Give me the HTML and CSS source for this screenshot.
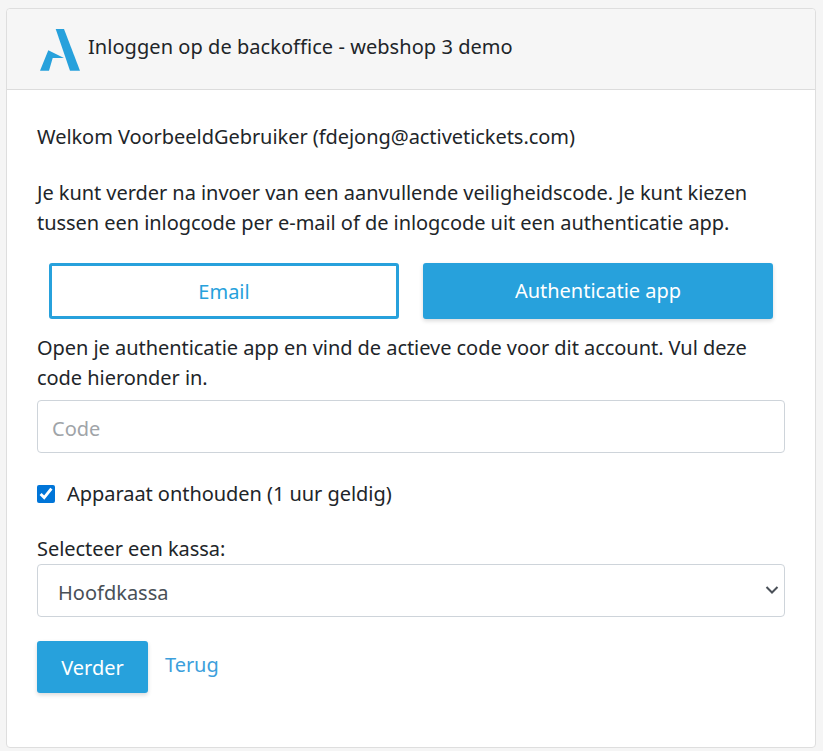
FILE: index.html
```html
<!DOCTYPE html>
<html lang="nl">
<head>
    <meta charset="UTF-8">
    <meta name="viewport" content="width=device-width, initial-scale=1.0">
    <title>Inloggen op de backoffice</title>
    <link rel="stylesheet" href="styles.css">
</head>
<body>

    <div class="card">
        <div class="card-header">
            <svg class="logo" width="40" height="42" viewBox="0 0 40 42">
                <path fill="#27a1dc" d="M15.700 0H24L40 41.700H30Z"/>
                <path fill="#27a1dc" d="M0 41.700H9L12.700 29H24L8.300 21.300Z"/>
            </svg>
            <span class="title">Inloggen op de backoffice - webshop 3 demo</span>
        </div>

        <form class="card-body">
            <p class="welcome">Welkom VoorbeeldGebruiker (fdejong@activetickets.com)</p>
            <p class="intro">Je kunt verder na invoer van een aanvullende veiligheidscode. Je kunt kiezen tussen een inlogcode per e-mail of de inlogcode uit een authenticatie app.</p>

            <div class="method-row">
                <button type="button" class="method">Email</button>
                <button type="button" class="method active">Authenticatie app</button>
            </div>

            <p class="hint">Open je authenticatie app en vind de actieve code voor dit account. Vul deze code hieronder in.</p>
            <input class="field" type="text" placeholder="Code">

            <label class="remember">
                <input type="checkbox" checked>
                <span>Apparaat onthouden (1 uur geldig)</span>
            </label>

            <label class="select-label" for="kassa">Selecteer een kassa:</label>
            <div class="select-wrap">
                <select class="field select" id="kassa">
                    <option>Hoofdkassa</option>
                </select>
                <svg class="chevron" width="14" height="10" viewBox="0 0 14 10">
                    <path d="M1.500 2L7 7.500L12.500 2" fill="none" stroke="#4a5058" stroke-width="2"/>
                </svg>
            </div>

            <div class="actions">
                <button type="submit" class="submit">Verder</button>
                <a class="back" href="#">Terug</a>
            </div>
        </form>
    </div>

</body>
</html>
```

FILE: styles.css
```css
body {
    font-family: 'Noto Sans', 'Open Sans', sans-serif;
    font-size: 20px;
    line-height: 30px;
    letter-spacing: -0.05px;
    color: #212529;
    background-color: #f5f5f5;
    margin: 0;
    padding: 8px 7px 0 6px;
}

.card {
    background-color: #fff;
    border: 1px solid #dedede;
    border-radius: 4px;
    height: 740px;
    box-sizing: border-box;
}

.card-header {
    display: flex;
    align-items: center;
    height: 81px;
    box-sizing: border-box;
    background-color: #f6f6f6;
    border-bottom: 1px solid #dcdcdc;
    border-radius: 4px 4px 0 0;
    padding-left: 33px;
    gap: 8px;
}

.logo {
    margin-top: 2px;
}

.title {
    margin-top: -4px;
    letter-spacing: 0.05px;
}

.card-body {
    padding: 32px 30px 0;
}

p {
    margin: 0;
}

.welcome {
    margin-bottom: 26px;
}

.method-row {
    display: flex;
    gap: 24px;
    margin: 25px 12px 14px;
}

.method {
    flex: 1;
    height: 56px;
    font-family: inherit;
    font-size: 20px;
    color: #27a1dc;
    background-color: #fff;
    border: 3px solid #27a1dc;
    border-radius: 3px;
    cursor: pointer;
}

.method.active {
    color: #fff;
    background-color: #27a1dc;
    box-shadow: 0 2px 4px rgba(0, 0, 0, 0.15);
    padding-bottom: 3px;
}

.field {
    display: block;
    width: 100%;
    height: 53px;
    box-sizing: border-box;
    font-family: inherit;
    font-size: 20px;
    color: #495057;
    background-color: #fff;
    border: 1px solid #ced4da;
    border-radius: 4px;
    padding: 3px 14px 0;
}

.field::placeholder {
    color: #a0a4a8;
}

.hint {
    margin-bottom: 7px;
}

.remember {
    display: flex;
    align-items: center;
    gap: 12px;
    margin-top: 26px;
}

.remember input {
    width: 18px;
    height: 18px;
    margin: 0;
    accent-color: #0075d8;
}

.select-label {
    display: block;
    margin-top: 25px;
}

.select-wrap {
    position: relative;
}

.select {
    appearance: none;
    padding-left: 20px;
}

.chevron {
    position: absolute;
    right: 6px;
    top: 21px;
}

.actions {
    display: flex;
    align-items: flex-start;
    gap: 17px;
    margin-top: 24px;
}

.submit {
    width: 111px;
    height: 52px;
    font-family: inherit;
    font-size: 20px;
    color: #fff;
    background-color: #27a1dc;
    border: none;
    border-radius: 3px;
    box-shadow: 0 2px 4px rgba(0, 0, 0, 0.15);
    cursor: pointer;
}

.back {
    color: #3c9fdc;
    text-decoration: none;
    margin-top: 9px;
}
```
